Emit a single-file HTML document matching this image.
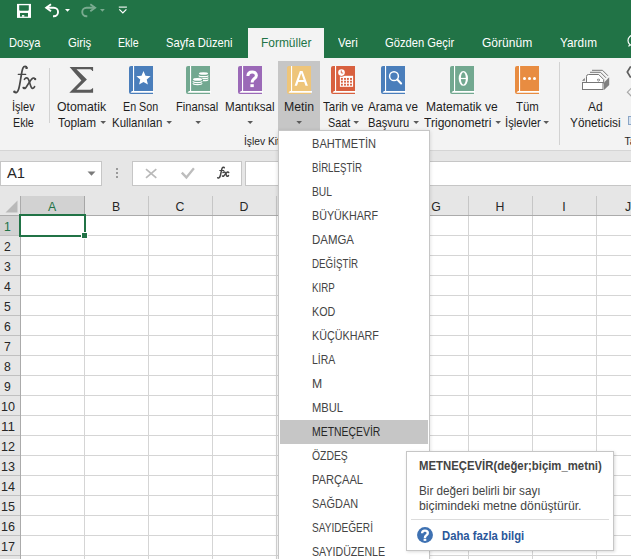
<!DOCTYPE html><html><head><meta charset="utf-8"><style>
html,body{margin:0;padding:0;width:631px;height:559px;overflow:hidden;background:#fff;position:relative}
.t,.r{position:absolute}
.t{font-family:"Liberation Sans",sans-serif;white-space:nowrap;transform-origin:0 0}
svg text{font-family:"Liberation Sans",sans-serif}
</style></head><body>
<div class="r" style="left:0px;top:0px;width:631px;height:58px;background:#217346;"></div>
<div class="r" style="left:248px;top:28px;width:76px;height:30px;background:#f3f3f3;"></div>
<svg class="r" style="left:0;top:0" width="140" height="28" viewBox="0 0 140 28">
<rect x="17" y="3.9" width="14" height="14" fill="#fff"/>
<path d="M19.2 5.2H28.8V9.7A1 1 0 0 1 27.8 10.7H20.2A1 1 0 0 1 19.2 9.7Z" fill="#217346"/>
<rect x="20" y="12.95" width="8" height="3.7" fill="#217346"/>
<rect x="22" y="15.1" width="2.3" height="1.6" fill="#fff"/>
<path d="M51 4.3L46.2 7.7L51 11.2" fill="none" stroke="#fff" stroke-width="1.9" stroke-linejoin="miter"/>
<path d="M46.5 7.7H53.8A4.25 4.25 0 0 1 53.8 16.2H53" fill="none" stroke="#fff" stroke-width="1.9"/>
<path d="M65 9H70L67.5 11.8Z" fill="#fff"/>
<g opacity="0.4">
<path d="M90.3 4.3L95.1 7.7L90.3 11.2" fill="none" stroke="#fff" stroke-width="1.9"/>
<path d="M94.8 7.7H86.5A4.25 4.25 0 0 0 86.5 16.2H87.3" fill="none" stroke="#fff" stroke-width="1.9"/>
<path d="M100 9H104.8L102.4 11.8Z" fill="#fff"/>
</g>
<path d="M118.8 7.1H126.9" stroke="#fff" stroke-width="1.1"/>
<path d="M119.3 9.4L122.85 13L126.4 9.4" fill="none" stroke="#fff" stroke-width="1.2"/>
</svg>
<div class="t" style="left:8.50px;top:37.37px;font-size:12.2px;line-height:12.2px;transform:scaleX(0.9107);color:#ffffff;font-weight:normal;">Dosya</div>
<div class="t" style="left:68.00px;top:37.37px;font-size:12.2px;line-height:12.2px;transform:scaleX(0.9294);color:#ffffff;font-weight:normal;">Giriş</div>
<div class="t" style="left:118.40px;top:37.37px;font-size:12.2px;line-height:12.2px;transform:scaleX(0.8681);color:#ffffff;font-weight:normal;">Ekle</div>
<div class="t" style="left:166.00px;top:37.37px;font-size:12.2px;line-height:12.2px;transform:scaleX(0.9178);color:#ffffff;font-weight:normal;">Sayfa Düzeni</div>
<div class="t" style="left:338.30px;top:37.37px;font-size:12.2px;line-height:12.2px;transform:scaleX(0.9372);color:#ffffff;font-weight:normal;">Veri</div>
<div class="t" style="left:385.20px;top:37.37px;font-size:12.2px;line-height:12.2px;transform:scaleX(0.9195);color:#ffffff;font-weight:normal;">Gözden Geçir</div>
<div class="t" style="left:482.40px;top:37.37px;font-size:12.2px;line-height:12.2px;transform:scaleX(0.9872);color:#ffffff;font-weight:normal;">Görünüm</div>
<div class="t" style="left:560.20px;top:37.37px;font-size:12.2px;line-height:12.2px;transform:scaleX(0.9657);color:#ffffff;font-weight:normal;">Yardım</div>
<div class="t" style="left:260.50px;top:37.37px;font-size:12.2px;line-height:12.2px;transform:scaleX(0.9802);color:#217346;font-weight:normal;">Formüller</div>
<svg class="r" style="left:620;top:30" width="11" height="20"><circle cx="13.2" cy="10.5" r="5.2" fill="none" stroke="#fff" stroke-width="1.2"/><path d="M9.8 14.6L8.6 16.5" stroke="#fff" stroke-width="1.2"/></svg>
<div class="r" style="left:0px;top:58px;width:631px;height:92px;background:#f3f3f3;"></div>
<div class="r" style="left:0px;top:150px;width:631px;height:1px;background:#d5d5d5;"></div>
<div class="r" style="left:278px;top:61px;width:42px;height:70px;background:#c6c6c6;"></div>
<div class="r" style="left:49px;top:68px;width:1px;height:55px;background:#d2d2d2;"></div>
<div class="r" style="left:559px;top:62px;width:1px;height:83px;background:#d2d2d2;"></div>
<div class="t" style="left:12.20px;top:100.57px;font-size:12.2px;line-height:12.2px;transform:scaleX(0.9050);color:#1e1e1e;font-weight:normal;">İşlev</div>
<div class="t" style="left:12.90px;top:116.57px;font-size:12.2px;line-height:12.2px;transform:scaleX(0.8766);color:#1e1e1e;font-weight:normal;">Ekle</div>
<div class="t" style="left:56.70px;top:100.57px;font-size:12.2px;line-height:12.2px;transform:scaleX(1.0054);color:#1e1e1e;font-weight:normal;">Otomatik</div>
<div class="t" style="left:58.40px;top:116.57px;font-size:12.2px;line-height:12.2px;transform:scaleX(0.9661);color:#1e1e1e;font-weight:normal;">Toplam</div>
<svg class="r" style="left:99.5px;top:120px" width="7" height="5"><path d="M0.4 0.9h5.6l-2.8 3z" fill="#5a5a5a"/></svg>
<div class="t" style="left:123.40px;top:100.57px;font-size:12.2px;line-height:12.2px;transform:scaleX(0.8796);color:#1e1e1e;font-weight:normal;">En Son</div>
<div class="t" style="left:111.70px;top:116.57px;font-size:12.2px;line-height:12.2px;transform:scaleX(0.9387);color:#1e1e1e;font-weight:normal;">Kullanılan</div>
<svg class="r" style="left:165.5px;top:120px" width="7" height="5"><path d="M0.4 0.9h5.6l-2.8 3z" fill="#5a5a5a"/></svg>
<div class="t" style="left:176.30px;top:100.57px;font-size:12.2px;line-height:12.2px;transform:scaleX(0.9151);color:#1e1e1e;font-weight:normal;">Finansal</div>
<svg class="r" style="left:194.5px;top:120px" width="7" height="5"><path d="M0.4 0.9h5.6l-2.8 3z" fill="#5a5a5a"/></svg>
<div class="t" style="left:224.60px;top:100.57px;font-size:12.2px;line-height:12.2px;transform:scaleX(0.9520);color:#1e1e1e;font-weight:normal;">Mantıksal</div>
<svg class="r" style="left:246.8px;top:120px" width="7" height="5"><path d="M0.4 0.9h5.6l-2.8 3z" fill="#5a5a5a"/></svg>
<div class="t" style="left:283.50px;top:100.57px;font-size:12.2px;line-height:12.2px;transform:scaleX(1.0057);color:#1e1e1e;font-weight:normal;">Metin</div>
<svg class="r" style="left:295.5px;top:120px" width="7" height="5"><path d="M0.4 0.9h5.6l-2.8 3z" fill="#5a5a5a"/></svg>
<div class="t" style="left:323.00px;top:100.57px;font-size:12.2px;line-height:12.2px;transform:scaleX(0.9482);color:#1e1e1e;font-weight:normal;">Tarih ve</div>
<div class="t" style="left:327.90px;top:116.57px;font-size:12.2px;line-height:12.2px;transform:scaleX(0.8886);color:#1e1e1e;font-weight:normal;">Saat</div>
<svg class="r" style="left:352.5px;top:120px" width="7" height="5"><path d="M0.4 0.9h5.6l-2.8 3z" fill="#5a5a5a"/></svg>
<div class="t" style="left:368.30px;top:100.57px;font-size:12.2px;line-height:12.2px;transform:scaleX(0.9578);color:#1e1e1e;font-weight:normal;">Arama ve</div>
<div class="t" style="left:368.30px;top:116.57px;font-size:12.2px;line-height:12.2px;transform:scaleX(0.9207);color:#1e1e1e;font-weight:normal;">Başvuru</div>
<svg class="r" style="left:413.0px;top:120px" width="7" height="5"><path d="M0.4 0.9h5.6l-2.8 3z" fill="#5a5a5a"/></svg>
<div class="t" style="left:426.40px;top:100.57px;font-size:12.2px;line-height:12.2px;transform:scaleX(0.9884);color:#1e1e1e;font-weight:normal;">Matematik ve</div>
<div class="t" style="left:423.60px;top:116.57px;font-size:12.2px;line-height:12.2px;transform:scaleX(0.9908);color:#1e1e1e;font-weight:normal;">Trigonometri</div>
<svg class="r" style="left:494.5px;top:120px" width="7" height="5"><path d="M0.4 0.9h5.6l-2.8 3z" fill="#5a5a5a"/></svg>
<div class="t" style="left:515.70px;top:100.57px;font-size:12.2px;line-height:12.2px;transform:scaleX(0.9344);color:#1e1e1e;font-weight:normal;">Tüm</div>
<div class="t" style="left:505.20px;top:116.57px;font-size:12.2px;line-height:12.2px;transform:scaleX(0.9263);color:#1e1e1e;font-weight:normal;">İşlevler</div>
<svg class="r" style="left:543.4px;top:120px" width="7" height="5"><path d="M0.4 0.9h5.6l-2.8 3z" fill="#5a5a5a"/></svg>
<div class="t" style="left:588.20px;top:100.57px;font-size:12.2px;line-height:12.2px;transform:scaleX(0.9785);color:#1e1e1e;font-weight:normal;">Ad</div>
<div class="t" style="left:570.20px;top:116.57px;font-size:12.2px;line-height:12.2px;transform:scaleX(0.9691);color:#1e1e1e;font-weight:normal;">Yöneticisi</div>
<div class="t" style="left:243.90px;top:136.68px;font-size:10.3px;line-height:10.3px;color:#262626;font-weight:normal;">İşlev Kitaplığı</div>
<div class="t" style="left:624.50px;top:136.68px;font-size:10.3px;line-height:10.3px;color:#262626;font-weight:normal;">Ta</div>
<svg class="r" style="left:0;top:58px" width="100" height="40" viewBox="0 58 100 40">
<g fill="none" stroke="#474747" stroke-linecap="round">
<path d="M26.8 67.9C26.6 66.1 24 65.7 22.9 68.1C21.4 71.2 20.6 82.5 18.6 89.3C17.6 92.6 15.6 93.4 14.3 91.9" stroke-width="1.7"/>
<path d="M18.2 74.3H25.8" stroke-width="1.2"/>
<path d="M24.4 79.4C25.6 77.4 27.6 77.3 28.6 79.6C29.7 82.2 30.4 85.8 31.4 87.5C32.4 89 33.9 88.3 34.6 86.6" stroke-width="1.6"/>
<path d="M35.1 79C34 77.4 32.4 77.9 30.9 79.9C29.4 81.8 27.2 85.9 25.6 87.9C24.6 89 23.6 88.5 23.2 87.6" stroke-width="1.6"/>
</g>
<g fill="#474747"><circle cx="26.5" cy="67.9" r="1.2"/><circle cx="14.5" cy="91.7" r="1.2"/><circle cx="35.2" cy="79.2" r="1.1"/><circle cx="24" cy="87.9" r="1.1"/></g>
<path d="M69.6 67H93.1V71H92.3C91.8 69.8 91 69.3 89 69.3H76.5L86.9 79.6L76.4 89.7H88.8C90.6 89.7 91.6 89.2 92.3 88.2H93.1V92.7H69.3L81.4 80.4Z" fill="#5a5a5a"/>
</svg>
<svg class="r" style="left:129px;top:66px" width="25" height="28" viewBox="0 0 25 28">
<path d="M2 0h22v28h-22a2 2 0 0 1-2-2v-24a2 2 0 0 1 2-2z" fill="#4a7ebb"/>
<rect x="4" y="0" width="1.1" height="25.5" fill="#fff"/>
<path d="M1.5 26.85L2.9 25.1H25V26.85Z" fill="#fff"/>
<path d="M14.50 5.00L16.50 9.75L21.63 10.18L17.73 13.55L18.91 18.57L14.50 15.90L10.09 18.57L11.27 13.55L7.37 10.18L12.50 9.75Z" fill="#fff"/></svg>
<svg class="r" style="left:186px;top:66px" width="25" height="28" viewBox="0 0 25 28">
<path d="M2 0h22v28h-22a2 2 0 0 1-2-2v-24a2 2 0 0 1 2-2z" fill="#72a890"/>
<rect x="4" y="0" width="1.1" height="25.5" fill="#fff"/>
<path d="M1.5 26.85L2.9 25.1H25V26.85Z" fill="#fff"/>
<ellipse cx="17.5" cy="7.5" rx="4.6" ry="1.3" fill="#fff"/>
<g fill="none" stroke="#fff" stroke-width="1.2"><path d="M12.9 9.4A4.6 1.3 0 0 0 22.1 9.4M12.9 11.4A4.6 1.3 0 0 0 22.1 11.4M12.9 13.4A4.6 1.3 0 0 0 22.1 13.4"/></g>
<path d="M6 13.3A5.5 2 0 0 1 17 13.3V17.4A5.5 2.2 0 0 1 6 17.4Z" fill="#72a890"/>
<ellipse cx="11.5" cy="13.4" rx="4.5" ry="1.3" fill="#fff"/>
<g fill="none" stroke="#fff" stroke-width="1.2"><path d="M7 15.3A4.5 1.3 0 0 0 16 15.3M7 17.3A4.5 1.3 0 0 0 16 17.3"/></g></svg>
<svg class="r" style="left:238px;top:66px" width="25" height="28" viewBox="0 0 25 28">
<path d="M2 0h22v28h-22a2 2 0 0 1-2-2v-24a2 2 0 0 1 2-2z" fill="#9b69b7"/>
<rect x="4" y="0" width="1.1" height="25.5" fill="#fff"/>
<path d="M1.5 26.85L2.9 25.1H25V26.85Z" fill="#fff"/>
<path d="M9.9 10C9.9 7 11.9 5.9 14.2 5.9C16.7 5.9 18.4 7.4 18.4 9.4C18.4 11.4 16.9 12.2 15.7 13.1C14.6 14 14.1 14.6 14.1 16.6" fill="none" stroke="#fff" stroke-width="3"/><rect x="12.4" y="18.2" width="3.4" height="2.9" fill="#fff"/></svg>
<svg class="r" style="left:287px;top:66px" width="25" height="28" viewBox="0 0 25 28">
<path d="M2 0h22v28h-22a2 2 0 0 1-2-2v-24a2 2 0 0 1 2-2z" fill="#eec57a"/>
<rect x="4" y="0" width="1.1" height="25.5" fill="#fff"/>
<path d="M1.5 26.85L2.9 25.1H25V26.85Z" fill="#fff"/>
<path d="M12.9 5H15.6L20.9 19.8H18.5L17.2 16H11.3L10 19.8H7.6ZM11.9 14H16.6L14.25 7.3Z" fill="#fff" fill-rule="evenodd"/></svg>
<svg class="r" style="left:331px;top:66px" width="25" height="28" viewBox="0 0 25 28">
<path d="M2 0h22v28h-22a2 2 0 0 1-2-2v-24a2 2 0 0 1 2-2z" fill="#d8603f"/>
<rect x="4" y="0" width="1.1" height="25.5" fill="#fff"/>
<path d="M1.5 26.85L2.9 25.1H25V26.85Z" fill="#fff"/>
<rect x="8.9" y="9.8" width="13.2" height="11" fill="#fff"/><circle cx="10.5" cy="6.6" r="4.2" fill="#d8603f"/><circle cx="10.5" cy="6.6" r="3.3" fill="#fff"/><path d="M10.3 4.5v2.5h1.9" stroke="#d8603f" stroke-width="0.9" fill="none"/><rect x="9.950000000000001" y="11.950000000000001" width="1.9" height="1.9" fill="#d8603f"/><rect x="9.950000000000001" y="14.75" width="1.9" height="1.9" fill="#d8603f"/><rect x="9.950000000000001" y="17.75" width="1.9" height="1.9" fill="#d8603f"/><rect x="13.05" y="11.950000000000001" width="1.9" height="1.9" fill="#d8603f"/><rect x="13.05" y="14.75" width="1.9" height="1.9" fill="#d8603f"/><rect x="13.05" y="17.75" width="1.9" height="1.9" fill="#d8603f"/><rect x="15.95" y="11.950000000000001" width="1.9" height="1.9" fill="#d8603f"/><rect x="15.95" y="14.75" width="1.9" height="1.9" fill="#d8603f"/><rect x="15.95" y="17.75" width="1.9" height="1.9" fill="#d8603f"/><rect x="19.05" y="11.950000000000001" width="1.9" height="1.9" fill="#d8603f"/><rect x="19.05" y="14.75" width="1.9" height="1.9" fill="#d8603f"/><rect x="19.05" y="17.75" width="1.9" height="1.9" fill="#d8603f"/></svg>
<svg class="r" style="left:381px;top:66px" width="25" height="28" viewBox="0 0 25 28">
<path d="M2 0h22v28h-22a2 2 0 0 1-2-2v-24a2 2 0 0 1 2-2z" fill="#4a7ebb"/>
<rect x="4" y="0" width="1.1" height="25.5" fill="#fff"/>
<path d="M1.5 26.85L2.9 25.1H25V26.85Z" fill="#fff"/>
<circle cx="13" cy="10.2" r="4.4" fill="none" stroke="#fff" stroke-width="1.5"/><path d="M16.3 13.5l3.8 3.9" stroke="#fff" stroke-width="2.1" stroke-linecap="round"/></svg>
<svg class="r" style="left:450px;top:66px" width="25" height="28" viewBox="0 0 25 28">
<path d="M2 0h22v28h-22a2 2 0 0 1-2-2v-24a2 2 0 0 1 2-2z" fill="#72a890"/>
<rect x="4" y="0" width="1.1" height="25.5" fill="#fff"/>
<path d="M1.5 26.85L2.9 25.1H25V26.85Z" fill="#fff"/>
<path d="M8.7 12.45A4.65 7.4 0 1 0 18 12.45A4.65 7.4 0 1 0 8.7 12.45ZM10.9 12.45A2.45 6.2 0 1 0 15.8 12.45A2.45 6.2 0 1 0 10.9 12.45Z" fill="#fff" fill-rule="evenodd"/><rect x="10" y="11.9" width="6.7" height="1.2" fill="#fff"/></svg>
<svg class="r" style="left:515px;top:66px" width="25" height="28" viewBox="0 0 25 28">
<path d="M2 0h22v28h-22a2 2 0 0 1-2-2v-24a2 2 0 0 1 2-2z" fill="#e88c41"/>
<rect x="4" y="0" width="1.1" height="25.5" fill="#fff"/>
<path d="M1.5 26.85L2.9 25.1H25V26.85Z" fill="#fff"/>
<circle cx="9.5" cy="12.4" r="1.5" fill="#fff"/><circle cx="14.5" cy="12.4" r="1.5" fill="#fff"/><circle cx="19.5" cy="12.4" r="1.5" fill="#fff"/></svg>
<svg class="r" style="left:576px;top:62px" width="40" height="36" viewBox="0 0 40 36">
<g fill="none" stroke="#777" stroke-width="1">
<path d="M16 8.3h10.5l5.5 5.5"/>
<path d="M14 10.3h10.5l5.5 5.5"/>
<path d="M10.5 20.5v-6a2 2 0 0 1 2-2h10.2l5 5v3.5z" fill="#fff"/>
<rect x="6.5" y="20.5" width="20.5" height="7" fill="#fff"/>
<path d="M22.5 16.8l1.2 1.2-1.2 1.2-1.2-1.2z"/>
</g>
<path d="M6 18.8l2.8-2.8v2.8z" fill="#777"/>
<path d="M28 20.5l5.2-5.2v7.6l-5.2 5.1z" fill="#808080"/>
</svg>
<svg class="r" style="left:624px;top:64px" width="7" height="62"><path d="M3.3 8L6.3 3H12V13H6.3Z" fill="none" stroke="#5f5f5f" stroke-width="1.7"/><path d="M7.6 23.9L3.4 28.2L7.6 32.5" fill="none" stroke="#a8a8a8" stroke-width="1.2"/><rect x="4.5" y="52.5" width="8" height="8" fill="#d5e1ee" stroke="#8aa5c6"/></svg>
<div class="r" style="left:0px;top:151px;width:631px;height:45px;background:#e6e6e6;"></div>
<div class="r" style="left:0px;top:161px;width:102px;height:25px;background:#fff;box-sizing:border-box;border:1px solid #c6c6c6;"></div>
<div class="t" style="left:7.00px;top:166.17px;font-size:14.8px;line-height:14.8px;color:#262626;font-weight:normal;">A1</div>
<svg class="r" style="left:86px;top:169.8px" width="12" height="8"><path d="M1.5 1.5h8l-4 4.2z" fill="#7a7a7a"/></svg>
<svg class="r" style="left:114px;top:166px" width="6" height="14"><rect x="2" y="2" width="2" height="2" fill="#9a9a9a"/><rect x="2" y="6" width="2" height="2" fill="#9a9a9a"/><rect x="2" y="10" width="2" height="2" fill="#9a9a9a"/></svg>
<div class="r" style="left:132px;top:161px;width:110px;height:25px;background:#fff;box-sizing:border-box;border:1px solid #c6c6c6;"></div>
<svg class="r" style="left:0;top:150px" width="260" height="40" viewBox="0 150 260 40"><path d="M146 169.2L156.3 177.8M156.3 169.2L146 177.8" stroke="#b9b9b9" stroke-width="1.7"/><path d="M181.8 172.6L186.4 177.4L193.9 168.3" fill="none" stroke="#bdbdbd" stroke-width="2.3"/><g transform="translate(210.11 140.02) scale(0.53 0.41)" fill="none" stroke="#444" stroke-linecap="round"><path vector-effect="non-scaling-stroke" d="M26.8 67.9C26.6 66.1 24 65.7 22.9 68.1C21.4 71.2 20.6 82.5 18.6 89.3C17.6 92.6 15.6 93.4 14.3 91.9" stroke-width="1.5"/><path vector-effect="non-scaling-stroke" d="M18.2 74.3H25.8" stroke-width="1.1"/><path vector-effect="non-scaling-stroke" d="M24.4 79.4C25.6 77.4 27.6 77.3 28.6 79.6C29.7 82.2 30.4 85.8 31.4 87.5C32.4 89 33.9 88.3 34.6 86.6" stroke-width="1.5"/><path vector-effect="non-scaling-stroke" d="M35.1 79C34 77.4 32.4 77.9 30.9 79.9C29.4 81.8 27.2 85.9 25.6 87.9C24.6 89 23.6 88.5 23.2 87.6" stroke-width="1.5"/></g></svg>
<div class="r" style="left:245px;top:161px;width:400px;height:25px;background:#fff;box-sizing:border-box;border:1px solid #c6c6c6;"></div>
<div class="r" style="left:0px;top:196px;width:631px;height:19px;background:#e6e6e6;"></div>
<div class="r" style="left:20px;top:196px;width:64px;height:19px;background:#d2d2d2;"></div>
<div class="r" style="left:0px;top:215px;width:20px;height:344px;background:#e6e6e6;"></div>
<div class="r" style="left:0px;top:215px;width:20px;height:20px;background:#d2d2d2;"></div>
<div class="r" style="left:0px;top:215px;width:631px;height:1px;background:#ababab;"></div>
<div class="r" style="left:20px;top:196px;width:1px;height:363px;background:#ababab;"></div>
<svg class="r" style="left:4px;top:199px" width="15" height="15"><path d="M13.5 1.5v12h-12z" fill="#b9b9b9"/></svg>
<div class="r" style="left:21px;top:216px;width:610px;height:343px;background:#fff;"></div>
<div class="r" style="left:84px;top:216px;width:1px;height:343px;background:#d5d5d5;"></div>
<div class="r" style="left:84px;top:196px;width:1px;height:19px;background:#a6a6a6;"></div>
<div class="r" style="left:148px;top:216px;width:1px;height:343px;background:#d5d5d5;"></div>
<div class="r" style="left:148px;top:196px;width:1px;height:19px;background:#c6c6c6;"></div>
<div class="r" style="left:212px;top:216px;width:1px;height:343px;background:#d5d5d5;"></div>
<div class="r" style="left:212px;top:196px;width:1px;height:19px;background:#c6c6c6;"></div>
<div class="r" style="left:276px;top:216px;width:1px;height:343px;background:#d5d5d5;"></div>
<div class="r" style="left:276px;top:196px;width:1px;height:19px;background:#c6c6c6;"></div>
<div class="r" style="left:340px;top:216px;width:1px;height:343px;background:#d5d5d5;"></div>
<div class="r" style="left:340px;top:196px;width:1px;height:19px;background:#c6c6c6;"></div>
<div class="r" style="left:404px;top:216px;width:1px;height:343px;background:#d5d5d5;"></div>
<div class="r" style="left:404px;top:196px;width:1px;height:19px;background:#c6c6c6;"></div>
<div class="r" style="left:468px;top:216px;width:1px;height:343px;background:#d5d5d5;"></div>
<div class="r" style="left:468px;top:196px;width:1px;height:19px;background:#c6c6c6;"></div>
<div class="r" style="left:532px;top:216px;width:1px;height:343px;background:#d5d5d5;"></div>
<div class="r" style="left:532px;top:196px;width:1px;height:19px;background:#c6c6c6;"></div>
<div class="r" style="left:596px;top:216px;width:1px;height:343px;background:#d5d5d5;"></div>
<div class="r" style="left:596px;top:196px;width:1px;height:19px;background:#c6c6c6;"></div>
<div class="r" style="left:21px;top:235px;width:610px;height:1px;background:#d5d5d5;"></div>
<div class="r" style="left:0px;top:235px;width:20px;height:1px;background:#c0c0c0;"></div>
<div class="r" style="left:21px;top:255px;width:610px;height:1px;background:#d5d5d5;"></div>
<div class="r" style="left:0px;top:255px;width:20px;height:1px;background:#c0c0c0;"></div>
<div class="r" style="left:21px;top:275px;width:610px;height:1px;background:#d5d5d5;"></div>
<div class="r" style="left:0px;top:275px;width:20px;height:1px;background:#c0c0c0;"></div>
<div class="r" style="left:21px;top:295px;width:610px;height:1px;background:#d5d5d5;"></div>
<div class="r" style="left:0px;top:295px;width:20px;height:1px;background:#c0c0c0;"></div>
<div class="r" style="left:21px;top:315px;width:610px;height:1px;background:#d5d5d5;"></div>
<div class="r" style="left:0px;top:315px;width:20px;height:1px;background:#c0c0c0;"></div>
<div class="r" style="left:21px;top:335px;width:610px;height:1px;background:#d5d5d5;"></div>
<div class="r" style="left:0px;top:335px;width:20px;height:1px;background:#c0c0c0;"></div>
<div class="r" style="left:21px;top:355px;width:610px;height:1px;background:#d5d5d5;"></div>
<div class="r" style="left:0px;top:355px;width:20px;height:1px;background:#c0c0c0;"></div>
<div class="r" style="left:21px;top:375px;width:610px;height:1px;background:#d5d5d5;"></div>
<div class="r" style="left:0px;top:375px;width:20px;height:1px;background:#c0c0c0;"></div>
<div class="r" style="left:21px;top:395px;width:610px;height:1px;background:#d5d5d5;"></div>
<div class="r" style="left:0px;top:395px;width:20px;height:1px;background:#c0c0c0;"></div>
<div class="r" style="left:21px;top:415px;width:610px;height:1px;background:#d5d5d5;"></div>
<div class="r" style="left:0px;top:415px;width:20px;height:1px;background:#c0c0c0;"></div>
<div class="r" style="left:21px;top:435px;width:610px;height:1px;background:#d5d5d5;"></div>
<div class="r" style="left:0px;top:435px;width:20px;height:1px;background:#c0c0c0;"></div>
<div class="r" style="left:21px;top:455px;width:610px;height:1px;background:#d5d5d5;"></div>
<div class="r" style="left:0px;top:455px;width:20px;height:1px;background:#c0c0c0;"></div>
<div class="r" style="left:21px;top:475px;width:610px;height:1px;background:#d5d5d5;"></div>
<div class="r" style="left:0px;top:475px;width:20px;height:1px;background:#c0c0c0;"></div>
<div class="r" style="left:21px;top:495px;width:610px;height:1px;background:#d5d5d5;"></div>
<div class="r" style="left:0px;top:495px;width:20px;height:1px;background:#c0c0c0;"></div>
<div class="r" style="left:21px;top:515px;width:610px;height:1px;background:#d5d5d5;"></div>
<div class="r" style="left:0px;top:515px;width:20px;height:1px;background:#c0c0c0;"></div>
<div class="r" style="left:21px;top:535px;width:610px;height:1px;background:#d5d5d5;"></div>
<div class="r" style="left:0px;top:535px;width:20px;height:1px;background:#c0c0c0;"></div>
<div class="r" style="left:21px;top:555px;width:610px;height:1px;background:#d5d5d5;"></div>
<div class="r" style="left:0px;top:555px;width:20px;height:1px;background:#c0c0c0;"></div>
<div class="t" style="left:47.90px;top:200.69px;font-size:12.3px;line-height:12.3px;color:#217346;font-weight:normal;">A</div>
<div class="t" style="left:111.90px;top:200.69px;font-size:12.3px;line-height:12.3px;color:#262626;font-weight:normal;">B</div>
<div class="t" style="left:175.56px;top:200.69px;font-size:12.3px;line-height:12.3px;color:#262626;font-weight:normal;">C</div>
<div class="t" style="left:239.56px;top:200.69px;font-size:12.3px;line-height:12.3px;color:#262626;font-weight:normal;">D</div>
<div class="t" style="left:303.90px;top:200.69px;font-size:12.3px;line-height:12.3px;color:#262626;font-weight:normal;">E</div>
<div class="t" style="left:368.24px;top:200.69px;font-size:12.3px;line-height:12.3px;color:#262626;font-weight:normal;">F</div>
<div class="t" style="left:431.22px;top:200.69px;font-size:12.3px;line-height:12.3px;color:#262626;font-weight:normal;">G</div>
<div class="t" style="left:495.56px;top:200.69px;font-size:12.3px;line-height:12.3px;color:#262626;font-weight:normal;">H</div>
<div class="t" style="left:562.29px;top:200.69px;font-size:12.3px;line-height:12.3px;color:#262626;font-weight:normal;">I</div>
<div class="t" style="left:624.92px;top:200.69px;font-size:12.3px;line-height:12.3px;color:#262626;font-weight:normal;">J</div>
<div class="t" style="left:4.11px;top:221.07px;font-size:12.2px;line-height:12.2px;color:#217346;font-weight:normal;">1</div>
<div class="t" style="left:4.11px;top:241.07px;font-size:12.2px;line-height:12.2px;color:#262626;font-weight:normal;">2</div>
<div class="t" style="left:4.11px;top:261.07px;font-size:12.2px;line-height:12.2px;color:#262626;font-weight:normal;">3</div>
<div class="t" style="left:4.11px;top:281.07px;font-size:12.2px;line-height:12.2px;color:#262626;font-weight:normal;">4</div>
<div class="t" style="left:4.11px;top:301.07px;font-size:12.2px;line-height:12.2px;color:#262626;font-weight:normal;">5</div>
<div class="t" style="left:4.11px;top:321.07px;font-size:12.2px;line-height:12.2px;color:#262626;font-weight:normal;">6</div>
<div class="t" style="left:4.11px;top:341.07px;font-size:12.2px;line-height:12.2px;color:#262626;font-weight:normal;">7</div>
<div class="t" style="left:4.11px;top:361.07px;font-size:12.2px;line-height:12.2px;color:#262626;font-weight:normal;">8</div>
<div class="t" style="left:4.11px;top:381.07px;font-size:12.2px;line-height:12.2px;color:#262626;font-weight:normal;">9</div>
<div class="t" style="left:0.90px;top:401.07px;font-size:12.2px;line-height:12.2px;transform:scaleX(1.0320);color:#262626;font-weight:normal;">10</div>
<div class="t" style="left:0.90px;top:421.07px;font-size:12.2px;line-height:12.2px;transform:scaleX(1.1055);color:#262626;font-weight:normal;">11</div>
<div class="t" style="left:0.90px;top:441.07px;font-size:12.2px;line-height:12.2px;transform:scaleX(1.0320);color:#262626;font-weight:normal;">12</div>
<div class="t" style="left:0.90px;top:461.07px;font-size:12.2px;line-height:12.2px;transform:scaleX(1.0320);color:#262626;font-weight:normal;">13</div>
<div class="t" style="left:0.90px;top:481.07px;font-size:12.2px;line-height:12.2px;transform:scaleX(1.0320);color:#262626;font-weight:normal;">14</div>
<div class="t" style="left:0.90px;top:501.07px;font-size:12.2px;line-height:12.2px;transform:scaleX(1.0320);color:#262626;font-weight:normal;">15</div>
<div class="t" style="left:0.90px;top:521.07px;font-size:12.2px;line-height:12.2px;transform:scaleX(1.0320);color:#262626;font-weight:normal;">16</div>
<div class="t" style="left:0.90px;top:541.07px;font-size:12.2px;line-height:12.2px;transform:scaleX(1.0320);color:#262626;font-weight:normal;">17</div>
<div class="r" style="left:19px;top:214px;width:67px;height:23px;box-sizing:border-box;border:2px solid #217346"></div>
<div class="r" style="left:82px;top:233px;width:5px;height:5px;background:#217346;outline:1px solid #fff;"></div>
<div class="r" style="left:278px;top:130px;width:152px;height:440px;background:#fff;box-sizing:border-box;border:1px solid #c6c6c6;box-shadow:0 1px 4px rgba(0,0,0,0.15)"></div>
<div class="r" style="left:280px;top:420px;width:148px;height:24px;background:#c6c6c6;"></div>
<div class="t" style="left:311.90px;top:137.57px;font-size:12.2px;line-height:12.2px;transform:scaleX(0.9093);color:#444444;font-weight:normal;">BAHTMETİN</div>
<div class="t" style="left:311.90px;top:161.57px;font-size:12.2px;line-height:12.2px;transform:scaleX(0.7930);color:#444444;font-weight:normal;">BİRLEŞTİR</div>
<div class="t" style="left:311.90px;top:185.57px;font-size:12.2px;line-height:12.2px;transform:scaleX(0.8429);color:#444444;font-weight:normal;">BUL</div>
<div class="t" style="left:311.90px;top:209.57px;font-size:12.2px;line-height:12.2px;transform:scaleX(0.8797);color:#444444;font-weight:normal;">BÜYÜKHARF</div>
<div class="t" style="left:311.90px;top:233.57px;font-size:12.2px;line-height:12.2px;transform:scaleX(0.9388);color:#444444;font-weight:normal;">DAMGA</div>
<div class="t" style="left:311.90px;top:257.57px;font-size:12.2px;line-height:12.2px;transform:scaleX(0.8018);color:#444444;font-weight:normal;">DEĞİŞTİR</div>
<div class="t" style="left:311.90px;top:281.57px;font-size:12.2px;line-height:12.2px;transform:scaleX(0.7972);color:#444444;font-weight:normal;">KIRP</div>
<div class="t" style="left:311.90px;top:305.57px;font-size:12.2px;line-height:12.2px;transform:scaleX(0.8813);color:#444444;font-weight:normal;">KOD</div>
<div class="t" style="left:311.90px;top:329.57px;font-size:12.2px;line-height:12.2px;transform:scaleX(0.8825);color:#444444;font-weight:normal;">KÜÇÜKHARF</div>
<div class="t" style="left:311.90px;top:353.57px;font-size:12.2px;line-height:12.2px;transform:scaleX(0.8591);color:#444444;font-weight:normal;">LİRA</div>
<div class="t" style="left:311.90px;top:377.57px;font-size:12.2px;line-height:12.2px;color:#444444;font-weight:normal;">M</div>
<div class="t" style="left:311.90px;top:401.57px;font-size:12.2px;line-height:12.2px;transform:scaleX(0.9147);color:#444444;font-weight:normal;">MBUL</div>
<div class="t" style="left:311.90px;top:425.57px;font-size:12.2px;line-height:12.2px;transform:scaleX(0.8552);color:#262626;font-weight:normal;">METNEÇEVİR</div>
<div class="t" style="left:311.90px;top:449.57px;font-size:12.2px;line-height:12.2px;transform:scaleX(0.8518);color:#444444;font-weight:normal;">ÖZDEŞ</div>
<div class="t" style="left:311.90px;top:473.57px;font-size:12.2px;line-height:12.2px;transform:scaleX(0.9100);color:#444444;font-weight:normal;">PARÇAAL</div>
<div class="t" style="left:311.90px;top:497.57px;font-size:12.2px;line-height:12.2px;transform:scaleX(0.8967);color:#444444;font-weight:normal;">SAĞDAN</div>
<div class="t" style="left:311.90px;top:521.57px;font-size:12.2px;line-height:12.2px;transform:scaleX(0.8280);color:#444444;font-weight:normal;">SAYIDEĞERİ</div>
<div class="t" style="left:311.90px;top:545.57px;font-size:12.2px;line-height:12.2px;transform:scaleX(0.8731);color:#444444;font-weight:normal;">SAYIDÜZENLE</div>
<div class="r" style="left:406px;top:451px;width:208px;height:100px;background:#fff;box-sizing:border-box;border:1px solid #c6c6c6;box-shadow:1px 1px 3px rgba(0,0,0,0.15)"></div>
<div class="t" style="left:418.80px;top:459.74px;font-size:12px;line-height:12px;transform:scaleX(0.9454);color:#444;font-weight:bold;">METNEÇEVİR(değer;biçim_metni)</div>
<div class="t" style="left:418.80px;top:484.84px;font-size:12px;line-height:12px;transform:scaleX(0.9742);color:#444;font-weight:normal;">Bir değeri belirli bir sayı</div>
<div class="t" style="left:418.80px;top:499.84px;font-size:12px;line-height:12px;transform:scaleX(1.0193);color:#444;font-weight:normal;">biçimindeki metne dönüştürür.</div>
<div class="r" style="left:411px;top:519px;width:198px;height:1px;background:#dcdcdc;"></div>
<svg class="r" style="left:400px;top:520px" width="40" height="30" viewBox="400 520 40 30"><circle cx="425" cy="535" r="7.95" fill="#3e71b2"/><path d="M422.1 533.2C422.1 531.3 423.3 530.6 424.9 530.6C426.7 530.6 427.8 531.6 427.8 533C427.8 534.4 426.7 535 425.9 535.7C425.2 536.3 424.9 536.8 424.9 538.2" fill="none" stroke="#fff" stroke-width="2.4"/><rect x="423.6" y="538.9" width="2.7" height="1.95" fill="#fff"/></svg>
<div class="t" style="left:441.80px;top:529.74px;font-size:12px;line-height:12px;transform:scaleX(0.9411);color:#2b579a;font-weight:bold;">Daha fazla bilgi</div>
</body></html>
